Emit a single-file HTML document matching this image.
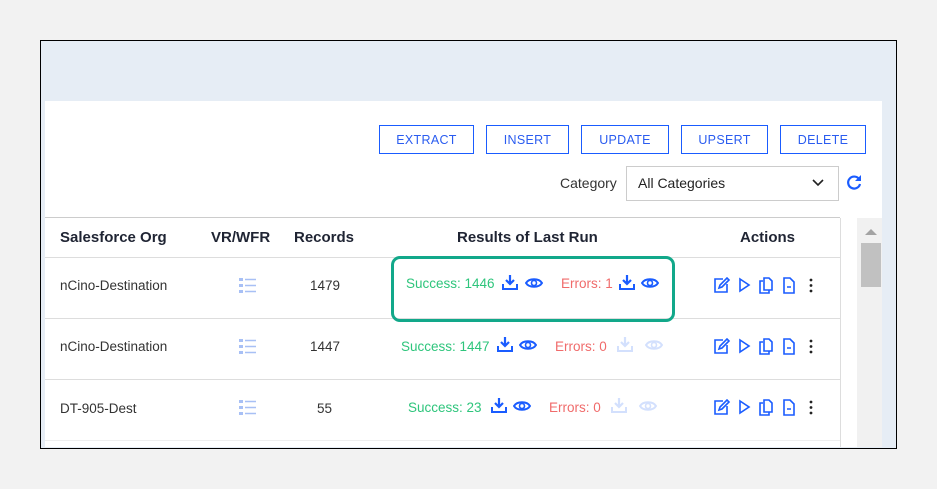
<!DOCTYPE html><html><head><style>
body{margin:0;width:937px;height:489px;background:#f2f2f2;position:relative;overflow:hidden;font-family:"Liberation Sans",sans-serif}
.a{position:absolute}
.frame{left:40px;top:40px;width:855px;height:407px;border:1px solid #000;background:#e6edf5;overflow:hidden}
.btn{position:absolute;top:125px;height:29px;border:1px solid #1a5cff;color:#2a5cf0;font-size:12.5px;letter-spacing:.3px;display:flex;align-items:center;justify-content:center;box-sizing:border-box;background:#fff}
.h{font-size:15px;font-weight:bold;color:#1f2433;top:229px}
.t{font-size:13.5px;color:#333}
.line{position:absolute;left:45px;width:795px;height:1px;background:#ddd}
.s{color:#2ec57c;font-size:13.5px}
.e{color:#f06b6b;font-size:13.5px}
</style></head><body>
<div class="a frame"></div>
<div class="a" style="left:45px;top:101px;width:837px;height:346px;background:#fff"></div>
<div class="a" style="left:857px;top:218px;width:25px;height:229px;background:#f1f1f1"></div>
<div class="a" style="left:861px;top:243px;width:20px;height:44px;background:#c1c1c1"></div>
<div class="a" style="left:865px;top:229px;width:0;height:0;border-left:6px solid transparent;border-right:6px solid transparent;border-bottom:6px solid #a3a3a3"></div>
<div class="a" style="left:840px;top:218px;width:1px;height:229px;background:#ddd"></div>
<div class="btn" style="left:379px;width:95px">EXTRACT</div>
<div class="btn" style="left:486px;width:83px">INSERT</div>
<div class="btn" style="left:581px;width:88px">UPDATE</div>
<div class="btn" style="left:681px;width:87px">UPSERT</div>
<div class="btn" style="left:780px;width:86px">DELETE</div>
<div class="a t" style="left:560px;top:175px;font-size:14px">Category</div>
<div class="a" style="left:626px;top:166px;width:213px;height:35px;border:1px solid #ccc;box-sizing:border-box"></div>
<div class="a" style="left:638px;top:175px;font-size:14px;color:#222">All Categories</div>
<svg class="a" style="left:812px;top:179px" width="12" height="8"><path d="M1 1l5 5 5-5" fill="none" stroke="#222" stroke-width="1.6"/></svg>
<svg class="a" style="left:845px;top:173px" width="18" height="18" viewBox="0 0 18 18"><path d="M14 6A6 6 0 1 0 15 11" fill="none" stroke="#1a5cff" stroke-width="2.2"/><path d="M16 2v6h-6z" fill="#1a5cff"/></svg>
<div class="line" style="top:217px;background:#ccc"></div>
<div class="line" style="top:257px"></div><div class="line" style="top:318px"></div><div class="line" style="top:379px"></div><div class="line" style="top:440px;background:#eee"></div>
<div class="a h" style="left:60px">Salesforce Org</div>
<div class="a h" style="left:211px">VR/WFR</div>
<div class="a h" style="left:294px">Records</div>
<div class="a h" style="left:457px">Results of Last Run</div>
<div class="a h" style="left:740px">Actions</div>
<div class="a" style="left:391px;top:256px;width:284px;height:66px;border:3px solid #12a88a;border-radius:9px;box-sizing:border-box"></div>
<svg width="0" height="0" style="position:absolute"><defs>
<g id="dl"><path d="M8 1v9M4 6l4 4 4-4" fill="none" stroke="currentColor" stroke-width="2.2"/><path d="M1 10v5h14v-5" fill="none" stroke="currentColor" stroke-width="2"/></g>
<g id="eye"><path d="M1 7C4 2 14 2 17 7 14 12 4 12 1 7z" fill="none" stroke="currentColor" stroke-width="2"/><circle cx="9" cy="7" r="2.5" fill="none" stroke="currentColor" stroke-width="1.6"/></g>
<g id="list"><rect x="0" y="0" width="4" height="3" fill="#a8c0f5"/><rect x="0" y="6" width="4" height="3" fill="#a8c0f5"/><rect x="0" y="12" width="4" height="3" fill="#a8c0f5"/><path d="M6 1.5h11M6 7.5h11M6 13.5h11" stroke="#a8c0f5" stroke-width="1.6"/></g>
<g id="act" fill="none" stroke="#1a5cff" stroke-width="1.6"><path d="M9 2H1v13h12V7"/><path d="M5 11l1-3 7-7 2 2-7 7z"/><path d="M26 2l9 6-9 6z"/><path d="M49 4h-3v12h9v-3M50 1h5l3 3v9h-8z"/><path d="M70 1h6l4 4v11H70zM73 10h4"/><circle cx="97" cy="3" r="1.4" fill="#222" stroke="none"/><circle cx="97" cy="8.5" r="1.4" fill="#222" stroke="none"/><circle cx="97" cy="14" r="1.4" fill="#222" stroke="none"/></g>
</defs></svg>
<div class="a t" style="left:60px;top:278px">nCino-Destination</div>
<div class="a t" style="left:60px;top:339px">nCino-Destination</div>
<div class="a t" style="left:60px;top:401px">DT-905-Dest</div>
<svg class="a" style="left:239px;top:278px" width="18" height="16"><use href="#list"/></svg>
<svg class="a" style="left:239px;top:339px" width="18" height="16"><use href="#list"/></svg>
<svg class="a" style="left:239px;top:400px" width="18" height="16"><use href="#list"/></svg>
<div class="a t" style="left:310px;top:278px">1479</div>
<div class="a t" style="left:310px;top:339px">1447</div>
<div class="a t" style="left:317px;top:401px">55</div>
<div class="a s" style="left:406px;top:276px">Success: 1446</div>
<svg class="a" style="left:502px;top:274px;color:#1a5cff" width="16" height="16"><use href="#dl"/></svg>
<svg class="a" style="left:525px;top:276px;color:#1a5cff" width="18" height="14"><use href="#eye"/></svg>
<div class="a e" style="left:561px;top:276px">Errors: 1</div>
<svg class="a" style="left:619px;top:274px;color:#1a5cff" width="16" height="16"><use href="#dl"/></svg>
<svg class="a" style="left:641px;top:276px;color:#1a5cff" width="18" height="14"><use href="#eye"/></svg>
<div class="a s" style="left:401px;top:339px">Success: 1447</div>
<svg class="a" style="left:497px;top:336px;color:#1a5cff" width="16" height="16"><use href="#dl"/></svg>
<svg class="a" style="left:519px;top:338px;color:#1a5cff" width="18" height="14"><use href="#eye"/></svg>
<div class="a e" style="left:555px;top:339px">Errors: 0</div>
<svg class="a" style="left:617px;top:336px;color:#d3e0fd" width="16" height="16"><use href="#dl"/></svg>
<svg class="a" style="left:645px;top:338px;color:#d3e0fd" width="18" height="14"><use href="#eye"/></svg>
<div class="a s" style="left:408px;top:400px">Success: 23</div>
<svg class="a" style="left:491px;top:397px;color:#1a5cff" width="16" height="16"><use href="#dl"/></svg>
<svg class="a" style="left:513px;top:399px;color:#1a5cff" width="18" height="14"><use href="#eye"/></svg>
<div class="a e" style="left:549px;top:400px">Errors: 0</div>
<svg class="a" style="left:611px;top:397px;color:#d3e0fd" width="16" height="16"><use href="#dl"/></svg>
<svg class="a" style="left:639px;top:399px;color:#d3e0fd" width="18" height="14"><use href="#eye"/></svg>
<svg class="a" style="left:714px;top:277px" width="104" height="17"><use href="#act"/></svg>
<svg class="a" style="left:714px;top:338px" width="104" height="17"><use href="#act"/></svg>
<svg class="a" style="left:714px;top:399px" width="104" height="17"><use href="#act"/></svg>
</body></html>
